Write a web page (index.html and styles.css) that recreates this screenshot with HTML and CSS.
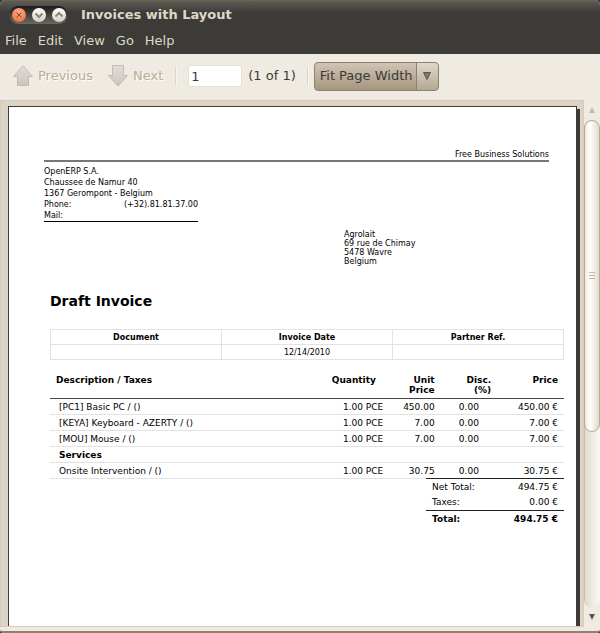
FILE: index.html
```html
<!DOCTYPE html>
<html lang="en">
<head>
<meta charset="utf-8">
<title>Invoices with Layout</title>
<link rel="stylesheet" href="styles.css">
</head>
<body>
<div class="window">
  <header class="titlebar">
    <div class="controls">
      <button class="control close" aria-label="Close"><svg viewBox="0 0 14 14"><path d="M4.500 4.500l5 5M9.500 4.500l-5 5"/></svg></button>
      <button class="control" aria-label="Minimize"><svg viewBox="0 0 14 14"><path d="M3.500 5.500l3.500 3.500 3.500-3.500"/></svg></button>
      <button class="control" aria-label="Maximize"><svg viewBox="0 0 14 14"><path d="M3.500 8.500l3.500-3.500 3.500 3.500"/></svg></button>
    </div>
    <h1 class="title">Invoices with Layout</h1>
  </header>
  <nav class="menubar">
    <button>File</button><button>Edit</button><button>View</button><button>Go</button><button>Help</button>
  </nav>
  <div class="toolbar">
    <button class="tool" disabled>
      <svg class="arrow" viewBox="0 0 20 22"><defs><linearGradient id="g" x1="0" y1="0" x2="0" y2="1"><stop offset="0" stop-color="#e2dcd6"/><stop offset="1" stop-color="#cdc5bf"/></linearGradient></defs><path d="M10 .7L19.500 11.500H15.500V20.500H4.500V11.500H.5z" fill="url(#g)" stroke="#c4bab2"/></svg>
      <span>Previous</span>
    </button>
    <button class="tool next" disabled>
      <svg class="arrow" viewBox="0 0 20 22"><path d="M10 21L.5 10.500H4.500V.5H15.500V10.500H19.500z" fill="url(#g)" stroke="#c4bab2"/></svg>
      <span>Next</span>
    </button>
    <span class="separator"></span>
    <input class="page-number" type="text" value="1" aria-label="Page">
    <span class="page-count">(1 of 1)</span>
    <span class="separator"></span>
    <div class="combo">
      <select aria-label="Zoom"><option>Fit Page Width</option></select>
      <svg class="combo-arrow" viewBox="0 0 8 8"><path d="M.5 .5H7.500L4 7.500z" fill="#7f786c" stroke="#5c574e"/></svg>
    </div>
  </div>
  <div class="body">
    <main class="viewport">
      <article class="page">
        <p class="slogan">Free Business Solutions</p>
        <address class="company">
          <div>OpenERP S.A.</div>
          <div>Chaussee de Namur 40</div>
          <div>1367 Gerompont - Belgium</div>
          <div class="pair"><span>Phone:</span><span>(+32).81.81.37.00</span></div>
          <div>Mail:</div>
        </address>
        <address class="client">
          <div>Agrolait</div>
          <div>69 rue de Chimay</div>
          <div>5478 Wavre</div>
          <div>Belgium</div>
        </address>
        <section class="invoice">
          <h2>Draft Invoice</h2>
          <table class="info">
            <thead><tr><th>Document</th><th>Invoice Date</th><th>Partner Ref.</th></tr></thead>
            <tbody><tr><td></td><td>12/14/2010</td><td></td></tr></tbody>
          </table>
          <table class="lines">
            <colgroup><col class="c-desc"><col class="c-qty"><col class="c-unit"><col class="c-disc"><col class="c-price"></colgroup>
            <thead><tr><th>Description / Taxes</th><th>Quantity</th><th>Unit<br>Price</th><th>Disc.<br>(%)</th><th>Price</th></tr></thead>
            <tbody>
              <tr><td>[PC1] Basic PC / ()</td><td>1.00 PCE</td><td>450.00</td><td>0.00</td><td>450.00 €</td></tr>
              <tr><td>[KEYA] Keyboard - AZERTY / ()</td><td>1.00 PCE</td><td>7.00</td><td>0.00</td><td>7.00 €</td></tr>
              <tr><td>[MOU] Mouse / ()</td><td>1.00 PCE</td><td>7.00</td><td>0.00</td><td>7.00 €</td></tr>
              <tr class="group"><td colspan="5">Services</td></tr>
              <tr><td>Onsite Intervention / ()</td><td>1.00 PCE</td><td>30.75</td><td>0.00</td><td>30.75 €</td></tr>
            </tbody>
          </table>
          <table class="totals">
            <tbody>
              <tr><th>Net Total:</th><td>494.75 €</td></tr>
              <tr><th>Taxes:</th><td>0.00 €</td></tr>
              <tr class="grand"><th>Total:</th><td>494.75 €</td></tr>
            </tbody>
          </table>
        </section>
      </article>
    </main>
    <div class="scrollbar">
      <button class="step" aria-label="Scroll up" disabled><svg viewBox="0 0 6 6"><path d="M3 0L6 6H0z" fill="#c6bba7"/></svg></button>
      <div class="trough"><div class="thumb"><i></i><i></i><i></i></div></div>
      <button class="step" aria-label="Scroll down"><svg viewBox="0 0 6 6"><path d="M0 0H6L3 6z" fill="#5f5a50"/></svg></button>
    </div>
  </div>
</div>
</body>
</html>
```
FILE: styles.css
```css
* { box-sizing: border-box; }

body {
  margin: 0;
  background: #34302a;
  font: 13px/16px "DejaVu Sans", sans-serif;
  color: #3c3b37;
}

button {
  padding: 0;
  border: 0;
  background: none;
  font: inherit;
  color: inherit;
}

h1, h2, p { margin: 0; }

.window {
  display: flex;
  flex-direction: column;
  height: 100vh;
  overflow: hidden;
  border-bottom: 2px solid #8e806b;
  border-radius: 5px 5px 3px 3px;
  background: #efebe3;
}

.titlebar {
  display: flex;
  align-items: center;
  gap: 13px;
  height: 28px;
  padding-left: 9px;
  border-top: 1px solid #6e6251;
  background: linear-gradient(#5d5b55, #3c3b37 12px);
}

.controls {
  display: flex;
  align-items: center;
  gap: 6px;
  height: 18px;
  padding: 0 2px 0 3px;
  border-radius: 9px;
  background: linear-gradient(#1c1b19, #6a6862);
}

.control {
  width: 14px;
  height: 14px;
  border-radius: 50%;
  background: linear-gradient(#fff, #d5cfc5);
}

.control.close { background: radial-gradient(circle at 50% 25%, #ffab85, #f27a4b 70%, #e0602f); }

.control svg {
  display: block;
  fill: none;
  stroke: #8a857d;
  stroke-width: 2;
}

.control.close svg {
  stroke: #6f4a3c;
  stroke-width: 1;
}

.title {
  font-size: 13px;
  line-height: 16px;
  font-weight: bold;
  color: #dfd8c8;
}

.menubar {
  display: flex;
  align-items: center;
  gap: 11px;
  height: 26px;
  padding-left: 5px;
  background: #3c3b37;
  color: #dfd8c8;
}

.toolbar {
  display: flex;
  align-items: center;
  height: 46px;
  padding: 0 13px 2px;
}

.tool {
  display: flex;
  align-items: center;
  gap: 5px;
  margin-right: 15px;
  color: #b9ab94;
  text-shadow: 1px 1px #fff;
}

.tool.next { margin-right: 12px; }

.arrow {
  width: 20px;
  height: 22px;
}

.separator {
  width: 2px;
  height: 18px;
  border-left: 1px solid #ddd5c6;
  border-right: 1px solid #f8f5ef;
}

.page-number {
  width: 54px;
  height: 22px;
  margin-left: 11px;
  padding: 0 2px;
  border: 1px solid #e6dfd2;
  border-radius: 2px;
  background: #fff;
  font: inherit;
  color: inherit;
}

.page-count { margin: 0 11px 0 6px; }

.combo {
  position: relative;
  margin-left: 5px;
}

.combo select {
  appearance: none;
  display: block;
  width: 125px;
  height: 29px;
  padding: 0 5px;
  border: 1px solid #8d806c;
  border-radius: 4px;
  background:
    linear-gradient(#8d806c, #8d806c) right 21px top / 1px 100% no-repeat,
    linear-gradient(#e0d8cb, #b5a791) right top / 21px 100% no-repeat,
    linear-gradient(#d0c4b3, #a59680);
  font: inherit;
  color: inherit;
}

.combo-arrow {
  position: absolute;
  top: 10px;
  right: 8px;
  width: 8px;
  height: 8px;
  pointer-events: none;
}

.body {
  display: flex;
  flex: 1;
  min-height: 0;
  padding-bottom: 4px;
}

.viewport {
  flex: 1;
  overflow: hidden;
  padding: 5px 3px 0 7px;
  border: 1px solid #d9cab5;
  background: #dcd4c7;
}

.page {
  height: 100%;
  margin-right: 3px;
  padding: 43px 12px 0 35px;
  border: solid #3c3b37;
  border-width: 1px 1px 0;
  background: #fff;
  box-shadow: 3px 3px #3c3b37;
  font-size: 8px;
  line-height: 11px;
  color: #000;
}

.slogan {
  margin-right: 15px;
  border-bottom: 2px solid #777;
  line-height: 10px;
  text-align: right;
}

address { font-style: normal; }

.company {
  width: 154px;
  margin-top: 4px;
  border-bottom: 1px solid #000;
}

.pair {
  display: flex;
  justify-content: space-between;
}

.client {
  margin: 8px 0 0 300px;
  line-height: 9px;
}

.invoice { margin: 26px 0 0 6px; }

h2 {
  font-size: 14px;
  line-height: 18px;
}

table {
  border-collapse: collapse;
  table-layout: fixed;
  width: 100%;
}

th, td { padding: 0; }

.info { margin-top: 19px; }

.info th, .info td {
  height: 15px;
  border: 1px solid #e2e2e2;
  text-align: center;
}

.lines, .totals {
  font-size: 9px;
  line-height: 10px;
}

.lines { margin-top: 12px; }
.c-desc { width: 53%; }
.c-qty { width: 13%; }
.c-unit { width: 10%; }
.c-disc { width: 11%; }
.c-price { width: 13%; }

.lines th {
  padding: 3px 6px;
  vertical-align: top;
  text-align: right;
}

.lines thead tr { border-bottom: 1px solid #444; }
.lines th:first-child { text-align: left; }

.lines th:nth-child(2) {
  padding-right: 10px;
  text-align: center;
}

.lines td {
  height: 16px;
  padding-right: 6px;
  border-bottom: 1px solid #e2e2e2;
  text-align: right;
  white-space: nowrap;
}

.lines td:first-child {
  padding-left: 9px;
  text-align: left;
}

.lines td:nth-child(4) {
  padding-right: 0;
  text-align: center;
}

.group { font-weight: bold; }

.totals {
  position: relative;
  width: 138px;
  margin: -1px 0 0 auto;
  border-top: 1px solid #222;
}

.totals th {
  height: 16px;
  padding-left: 6px;
  font-weight: normal;
  text-align: left;
}

.totals td {
  padding-right: 6px;
  text-align: right;
}

.totals .grand { border-top: 1px solid #222; }
.totals .grand > * { font-weight: bold; }

.scrollbar {
  display: flex;
  flex-direction: column;
  width: 16px;
}

.step {
  display: flex;
  align-items: center;
  justify-content: center;
  height: 20px;
}

.step svg {
  width: 6px;
  height: 6px;
}

.trough {
  flex: 1;
  border-left: 1px solid #cdbfa6;
  border-radius: 8px;
  background: linear-gradient(90deg, #e4dccf, #faf8f5);
}

.thumb {
  display: flex;
  flex-direction: column;
  align-items: center;
  justify-content: center;
  gap: 2px;
  height: 64%;
  margin-left: -1px;
  border: 1px solid #b9a88c;
  border-radius: 8px;
  background: linear-gradient(90deg, #eee9df, #fff 35%, #e3dacb);
}

.thumb i {
  width: 6px;
  height: 1px;
  background: #c6b89f;
}
```
